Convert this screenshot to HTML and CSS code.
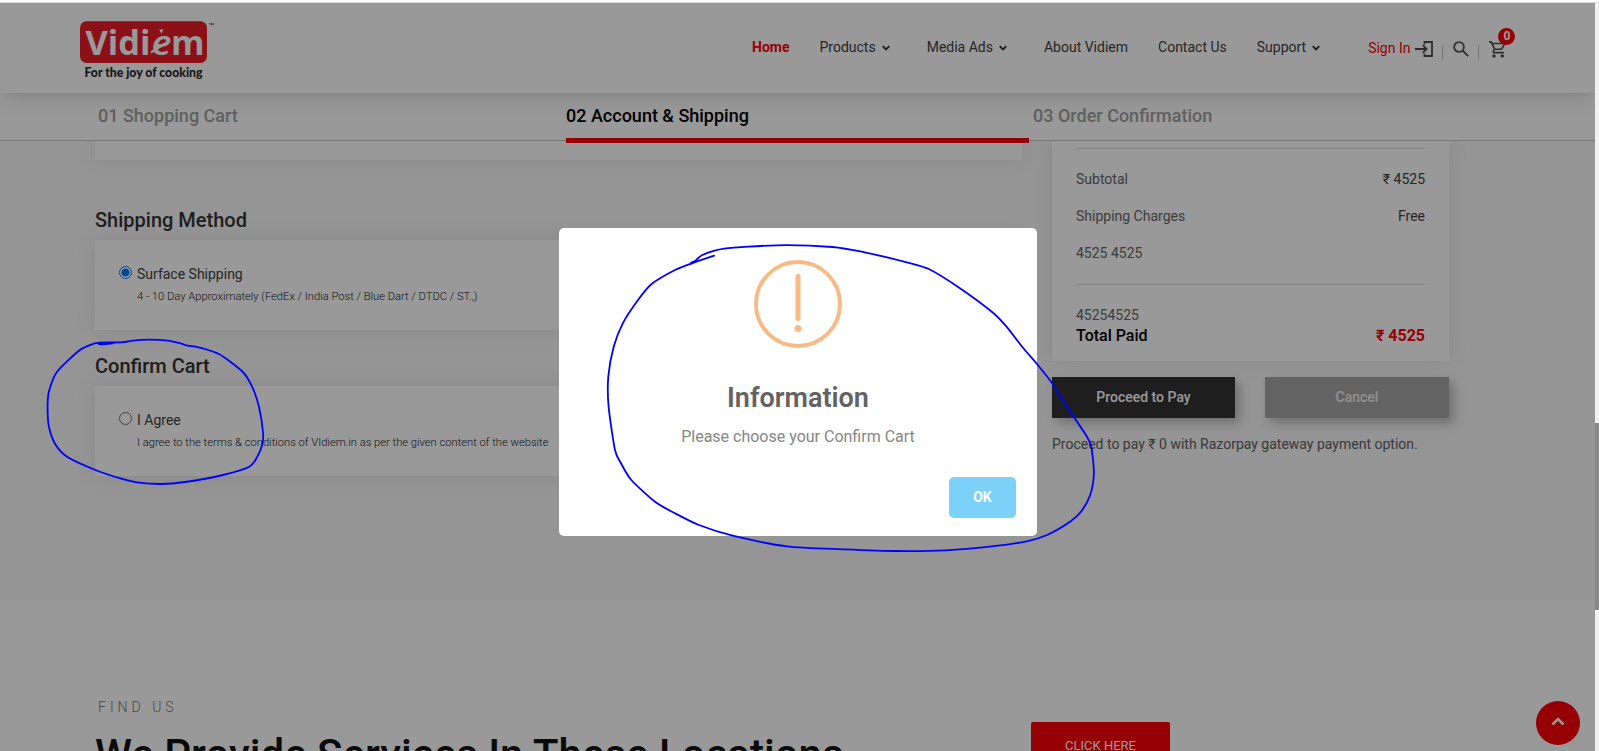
FILE: index.html
```html
<!DOCTYPE html>
<html lang="en">
<head>
<meta charset="utf-8">
<title>Vidiem - Account &amp; Shipping</title>
<link rel="stylesheet" href="styles.css">
</head>
<body>
<div class="page">
  <header class="header">
    <svg class="logo" width="138" height="66" viewBox="0 0 138 66">
      <rect x="0" y="3.300" width="127" height="41.700" rx="6.500" fill="#e81c28"/>
      <g fill="#fff" font-family="Open Sans, sans-serif" font-weight="700" font-size="34">
        <text x="5.500" y="37" textLength="65" lengthAdjust="spacingAndGlyphs">Vidi</text>
        <text x="71.500" y="37" font-weight="600" font-style="italic" textLength="20" lengthAdjust="spacingAndGlyphs">e</text>
        <text x="91" y="37" textLength="33.500" lengthAdjust="spacingAndGlyphs">m</text>
      </g>
      <path d="M71 34.500 86 25" fill="none" stroke="#fff" stroke-width="2.200"/>
      <path d="M79 11.500h4.500l-2 4z" fill="#fff"/>
      <text x="128" y="8.500" font-family="Liberation Sans, sans-serif" font-size="6" fill="#333">™</text>
      <text x="4.500" y="58.500" font-family="Lato, sans-serif" font-weight="900" font-size="12.500" fill="#2a2a2a" textLength="118" lengthAdjust="spacingAndGlyphs">For the joy of cooking</text>
    </svg>
    <nav class="nav">
      <a class="nav-item home">Home</a>
      <a class="nav-item drop">Products<svg class="chev" viewBox="0 0 8 6"><path d="M.7 1.200 4 4.500 7.300 1.200"/></svg></a>
      <a class="nav-item drop">Media Ads<svg class="chev" viewBox="0 0 8 6"><path d="M.7 1.200 4 4.500 7.300 1.200"/></svg></a>
      <a class="nav-item">About Vidiem</a>
      <a class="nav-item">Contact Us</a>
      <a class="nav-item drop">Support<svg class="chev" viewBox="0 0 8 6"><path d="M.7 1.200 4 4.500 7.300 1.200"/></svg></a>
    </nav>
    <div class="tools">
      <span class="signin">Sign In</span>
      <svg class="login" width="18" height="16" viewBox="0 0 18 16"><path d="M0 8h11M7.800 4.200 11.600 8l-3.800 3.800M9.500 3.500V1H17v14H9.500v-2.500" fill="none" stroke="#4c4c4c" stroke-width="1.800"/></svg>
      <span class="sep"></span>
      <svg class="search" width="16" height="16" viewBox="0 0 16 16"><circle cx="6" cy="6" r="4.900" fill="none" stroke="#555" stroke-width="1.900"/><path d="m9.500 9.500 5.600 5.600" stroke="#555" stroke-width="2"/></svg>
      <span class="sep"></span>
      <div class="cart">
        <svg width="17" height="17" viewBox="1 2 20.500 20.500"><path fill="#4c4c4c" d="M15.550 13c.75 0 1.410-.41 1.750-1.030l3.580-6.490A.996.996 0 0 0 20.010 4H5.210l-.94-2H1v2h2l3.600 7.590-1.350 2.440C4.520 15.370 5.480 17 7 17h12v-2H7l1.100-2h7.450zM6.160 6h12.150l-2.760 5H8.530L6.160 6zM7 18c-1.100 0-1.990.9-1.990 2S5.900 22 7 22s2-.9 2-2-.9-2-2-2zm10 0c-1.100 0-1.990.9-1.990 2s.89 2 1.990 2 2-.9 2-2-.9-2-2-2z"/></svg>
        <span class="badge">0</span>
      </div>
    </div>
  </header>
  <div class="steps">
    <div class="step">01 Shopping Cart</div>
    <div class="step active">02 Account &amp; Shipping</div>
    <div class="step last">03 Order Confirmation</div>
  </div>
  <main class="main">
    <section class="left">
      <div class="card tail"></div>
      <h2 class="title first">Shipping Method</h2>
      <div class="card option">
        <span class="radio on"></span>
        <div><div class="opt-name">Surface Shipping</div><div class="opt-note">4 - 10 Day Approximately (FedEx / India Post / Blue Dart / DTDC / ST.,)</div></div>
      </div>
      <h2 class="title">Confirm Cart</h2>
      <div class="card option">
        <span class="radio"></span>
        <div><div class="opt-name">I Agree</div><div class="opt-note">I agree to the terms &amp; conditions of VIdiem.in as per the given content of the website</div></div>
      </div>
    </section>
    <aside class="right">
      <div class="card summary">
        <div class="row"><span>Subtotal</span><span class="val">₹ 4525</span></div>
        <div class="row"><span>Shipping Charges</span><span class="val">Free</span></div>
        <div class="row"><span>4525 4525</span></div>
        <div class="rule"></div>
        <div class="row plain">45254525</div>
        <div class="row total"><span>Total Paid</span><span class="due">₹ 4525</span></div>
      </div>
      <div class="buttons"><div class="btn dark">Proceed to Pay</div><div class="btn grey">Cancel</div></div>
      <p class="hint">Proceed to pay ₹ 0 with Razorpay gateway payment option.</p>
    </aside>
  </main>
  <section class="find">
    <div class="find-text"><div class="eyebrow">FIND US</div><h1 class="big">We Provide Services In These Locations</h1></div>
    <div class="click">CLICK HERE</div>
  </section>
  <div class="to-top"><svg width="14" height="9" viewBox="0 0 14 9"><path d="M1.500 7.500 7 2l5.500 5.500" fill="none" stroke="#fff" stroke-width="2.600"/></svg></div>
  <div class="overlay"></div>
</div>
<div class="scrollbar"><div class="thumb"></div></div>
<div class="modal">
  <svg class="warn" width="88" height="88" viewBox="0 0 88 88" fill="#f8bb86"><circle cx="44" cy="44" r="42" fill="none" stroke="#f8bb86" stroke-width="4"/><rect x="41.500" y="14" width="5" height="47" rx="2"/><circle cx="44" cy="68.500" r="3.500"/></svg>
  <div class="modal-title"><span>Information</span></div>
  <div class="modal-text"><span>Please choose your Confirm Cart</span></div>
  <div class="modal-foot"><div class="ok">OK</div></div>
</div>
<svg class="ink" width="1599" height="751" viewBox="0 0 1599 751">
  <path data-points="113,343.3 100.600,344.300 98.900,342.700 121.300,342.300 133.300,340.700 148.800,339.700 167.700,340.700 181.500,343.700 187.700,345.700 198.700,347.300 219.400,354.300 242.800,372 252.100,386.700 259,406.700 263.100,433.300 262.100,445 257.300,456.700 249.300,466.700 222.800,475 185,482 160.900,484 136.700,482.300 121.300,478.700 95.400,470 67.900,457.300 55.800,445 48.900,426.700 47.600,406.700 48.900,391.700 56.900,372 79.900,350 93.700,343.700 98.900,342.700"/>
  <path data-points="714.1,255.7 692,263.3 675,270 651.6,284 638,300 622.8,323.3 613.7,346.7 608.3,376.7 608.6,406.7 615,450 621,463.3 631.3,480 655,501.7 675,513.3 698.9,525 732.7,535.7 786.8,546.3 844.3,549.3 898.3,551 945.7,550.3 989.6,546.7 1026.8,541.3 1047,535 1070,521.7 1081,511.7 1090.2,495 1093.9,473.3 1091.3,446.7 1086.5,436 1077,421.7 1062.5,400 1052,383 1037,364 1023.4,348.3 1006.5,326.7 993,312.7 959.2,287.7 928.8,269 906.8,262.3 864.5,252.3 832.4,247 776.6,245.3 724.2,248.7 702.3,255 695.5,260.7 691,262.7"/>
</svg>
<script src="ink.js"></script>
</body>
</html>
```
FILE: ink.js
```js
// Turns each list of pen points into a smooth Catmull-Rom stroke.
document.querySelectorAll('.ink path').forEach(function (el) {
  var p = el.dataset.points.trim().split(/\s+/).map(function (s) { return s.split(',').map(Number); });
  var d = 'M' + p[0];
  for (var i = 0; i < p.length - 1; i++) {
    var a = p[i - 1] || p[i], b = p[i], c = p[i + 1], e = p[i + 2] || c;
    d += 'C' + [b[0] + (c[0] - a[0]) / 8, b[1] + (c[1] - a[1]) / 8,
                c[0] - (e[0] - b[0]) / 8, c[1] - (e[1] - b[1]) / 8, c[0], c[1]];
  }
  el.setAttribute('d', d);
});
```
FILE: styles.css
```css
* { box-sizing: border-box; }
body { margin: 0; width: 1599px; height: 751px; overflow: hidden; position: relative; display: flex; padding-top: 3px; background: linear-gradient(#fff 2px, #d8d8d8 2px, #d8d8d8 3px, #fff 3px); font-family: Roboto, sans-serif; font-size: 14px; color: #444; }
.page { position: relative; width: 1595px; height: 748px; overflow: hidden; background: #fff; display: flex; flex-direction: column; }
.header { position: relative; z-index: 3; height: 90px; flex: none; background: #fff; display: flex; padding-left: 80px; box-shadow: 0 8px 18px -3px rgba(0,0,0,.15); }
.logo { margin-top: 15px; flex: none; }
.nav { display: flex; margin-left: 534px; height: 88px; align-items: center; color: #404040; white-space: nowrap; }
.nav-item { margin-right: 30px; }
.nav-item.drop { margin-right: 37px; display: flex; align-items: center; }
.home { color: #fa0007; font-weight: 700; }
.chev { width: 8px; height: 6px; margin: 2px 0 0 6px; fill: none; stroke: #333; stroke-width: 1.900; overflow: visible; }
.tools { display: flex; margin-left: 11px; height: 90px; align-items: center; }
.signin { color: #fa0007; margin-right: 5px; white-space: nowrap; }
.tools svg { display: block; margin-top: 2px; }
.sep { width: 1px; height: 15px; background: #c4c4c4; margin: 9px 10px 0 9px; }
.search + .sep { margin-left: 9px; }
.cart { position: relative; }
.badge { position: absolute; left: 9px; top: -11px; width: 17px; height: 17px; border-radius: 50%; background: #fa0007; color: #fff; font-size: 12px; font-weight: 700; line-height: 17px; text-align: center; }
.steps { position: relative; z-index: 2; flex: none; height: 48px; background: #fff; border-bottom: 1px solid #c8c8c8; display: flex; padding-left: 98px; font-size: 18px; font-weight: 500; color: #a0a0a0; line-height: 45px; }
.step { width: 468px; }
.step.active { width: 463px; height: 50px; border-bottom: 5px solid #fa0007; color: #000; }
.step.last { margin-left: 4px; }
.main { flex: none; height: 459px; background: #f8f8f8; display: flex; padding-left: 95px; }
.card { background: #fff; box-shadow: 0 0 20px rgba(0,0,0,.09); }
.left { width: 927px; }
.tail { height: 19px; }
.title { margin: 0; font-size: 20px; font-weight: 500; color: #333; line-height: 24px; height: 56px; padding-top: 24px; }
.title.first { height: 80px; padding-top: 48px; }
.option { height: 90px; padding: 24px 0 0 24px; display: flex; }
.radio { width: 13px; height: 13px; border: 1px solid #767676; border-radius: 50%; margin: 2px 5px 0 0; flex: none; }
.radio.on { border-color: #0075ff; background: radial-gradient(circle, #0075ff 3.700px, #fff 4.300px); }
.opt-name { line-height: 20px; color: #404040; }
.opt-note { font-size: 11.2px; font-weight: 300; line-height: 16px; margin-top: 5px; color: #222; white-space: nowrap; }
.right { width: 397px; margin-left: 30px; }
.summary { height: 220px; padding: 0 24px; }
.summary::before { content: ""; display: block; height: 1px; background: #ddd; margin-bottom: 12px; border: 0; transform: translateY(7px); }
.row { display: flex; justify-content: space-between; height: 37px; line-height: 37px; padding-top: 7px; color: #666; }
.val { color: #404040; }
.rule { height: 1px; background: #ddd; margin: 19px 0 20px; }
.row.plain { height: 21px; line-height: 21px; padding: 0; }
.row.total { height: 20px; line-height: 20px; padding: 0; font-size: 16px; font-weight: 500; color: #000; }
.due { color: #fa0007; font-weight: 700; }
.buttons { display: flex; gap: 30px; margin-top: 16px; }
.btn { width: 183px; height: 41px; line-height: 40px; text-align: center; color: #fff; font-weight: 500; box-shadow: 5px 5px 10px rgba(0,0,0,.25); }
.btn.grey { width: 184px; color: #f0f0f0; }
.dark { background: #333; }
.grey { background: #a6a6a6; }
.hint { margin: 16px 0 0; line-height: 20px; color: #606060; white-space: nowrap; }
.find { display: flex; flex: none; height: 160px; padding-left: 95px; }
.find-text { width: 936px; padding-top: 97px; white-space: nowrap; }
.eyebrow { font-size: 14px; font-weight: 300; letter-spacing: 4px; line-height: 20px; padding-left: 3px; color: #777; }
.big { margin: 12px 0 0; font-size: 42px; line-height: 52px; font-weight: 500; color: #111; }
.click { width: 139px; height: 46px; margin-top: 122px; background: #fa0007; border-radius: 2px; color: #fff; font-size: 13px; line-height: 48px; text-align: center; }
.to-top { position: absolute; z-index: 4; left: 1536px; top: 698px; width: 44px; height: 44px; border-radius: 50%; background: #fa0007; display: flex; align-items: center; justify-content: center; padding-bottom: 4px; }
.overlay { position: absolute; z-index: 10; inset: 0; background: rgba(0,0,0,.4); }
.scrollbar { width: 4px; height: 748px; background: #f1f1f1; padding-top: 420px; }
.thumb { height: 187px; background: #888; }
.modal { position: absolute; z-index: 20; left: 559px; top: 228px; width: 478px; height: 308px; background: #fff; border-radius: 5px; display: flex; flex-direction: column; align-items: center; }
.warn { margin-top: 32px; flex: none; }
.modal-title { margin-top: 33px; font-size: 27px; line-height: 34px; font-weight: 600; color: #626262; }
.modal-text { margin-top: 12px; font-size: 16px; line-height: 20px; color: #868686; }
.modal-foot { align-self: flex-end; margin: 30px 21px 0 0; }
.ok { width: 67px; height: 41px; border-radius: 5px; background: #7cd1f9; color: #fff; font-weight: 700; line-height: 41px; text-align: center; }
.ink { position: absolute; z-index: 30; left: 0; top: 0; fill: none; stroke: #00f; stroke-width: 1.800; stroke-linecap: round; stroke-linejoin: round; pointer-events: none; }
```
